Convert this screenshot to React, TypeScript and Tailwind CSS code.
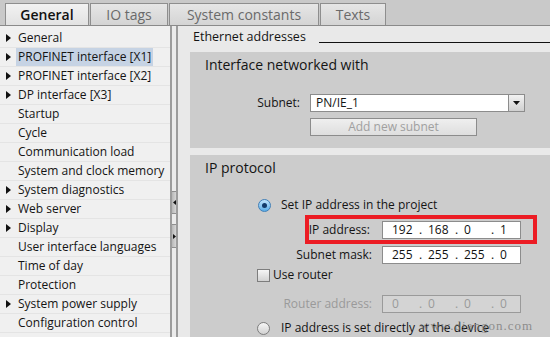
import React from "react";

const navItems: { label: string; arrow?: boolean; selected?: boolean }[] = [
  { label: "General", arrow: true },
  { label: "PROFINET interface [X1]", arrow: true, selected: true },
  { label: "PROFINET interface [X2]", arrow: true },
  { label: "DP interface [X3]", arrow: true },
  { label: "Startup" },
  { label: "Cycle" },
  { label: "Communication load" },
  { label: "System and clock memory" },
  { label: "System diagnostics", arrow: true },
  { label: "Web server", arrow: true },
  { label: "Display", arrow: true },
  { label: "User interface languages" },
  { label: "Time of day" },
  { label: "Protection" },
  { label: "System power supply", arrow: true },
  { label: "Configuration control" },
];

const tabs = [
  { label: "General", active: true, w: "w-[84px]" },
  { label: "IO tags", w: "w-[78px]" },
  { label: "System constants", w: "w-[150px]" },
  { label: "Texts", w: "w-[66px]" },
];

function Arrow() {
  return (
    <svg width="5" height="8" viewBox="0 0 5 8" className="shrink-0">
      <polygon points="0,0 5,4 0,8" fill="#111" />
    </svg>
  );
}

function IpBox({ parts, disabled }: { parts: string[]; disabled?: boolean }) {
  return (
    <div
      className={`flex h-[18px] w-[139px] items-center border pl-[9px] text-[12px] ${
        disabled
          ? "border-[#9a9a9a] bg-[#d4d4d4] text-[#9a9a9a]"
          : "border-[#8c8c8c] bg-white text-[#111]"
      }`}
    >
      {parts.map((p, i) => (
        <div key={i} className="flex w-[36px] shrink-0">
          <span className="w-[27px]">{p}</span>
          {i < 3 && <span>.</span>}
        </div>
      ))}
    </div>
  );
}

function Radio({ checked }: { checked?: boolean }) {
  return checked ? (
    <div className="flex h-[13px] w-[13px] items-center justify-center rounded-full border border-[#3f7fb8] bg-gradient-to-b from-[#bfe3fb] to-[#5aaee8]">
      <div className="h-[5px] w-[5px] rounded-full bg-[#123a6a]" />
    </div>
  ) : (
    <div className="h-[13px] w-[13px] rounded-full border border-[#7d7d7d] bg-gradient-to-b from-[#f6f6f6] to-[#d2d2d2]" />
  );
}

export default function App() {
  return (
    <div
      className="relative flex h-[337px] w-[550px] flex-col overflow-hidden bg-[#e9e9e9] text-[#141414]"
      style={{ fontFamily: '"Open Sans", "Noto Sans", sans-serif' }}
    >
      {/* tabs */}
      <div className="flex h-[26px] shrink-0 items-end gap-[1px] border-b border-[#8a8a8a] bg-[#c9c9c9] pl-[5px]">
        {tabs.map((t) => (
          <div
            key={t.label}
            className={`flex h-[22px] items-center justify-center border border-b-0 border-[#8e8e8e] text-[14px] ${t.w} ${
              t.active
                ? "bg-gradient-to-b from-[#f2f2f2] to-[#e2e2e2] font-semibold text-[#111]"
                : "bg-gradient-to-b from-[#e6e6e6] to-[#d4d4d4] text-[#6a6a6a]"
            }`}
          >
            {t.label}
          </div>
        ))}
      </div>

      <div className="flex min-h-0 flex-1">
        {/* left navigation */}
        <div className="w-[170px] shrink-0 bg-[#f0f0f0] pt-[3px] text-[12px]">
          {navItems.map((n) => (
            <div
              key={n.label}
              className="flex h-[19px] items-center border-b border-[#e4e4e4] pl-[6px]"
            >
              <div className="w-[10px]">{n.arrow && <Arrow />}</div>
              <span
                className={`whitespace-nowrap px-[2px] leading-[18px] ${
                  n.selected ? "bg-[#c6d3e4]" : ""
                }`}
              >
                {n.label}
              </span>
            </div>
          ))}
        </div>

        {/* splitter */}
        <div className="flex w-[8px] shrink-0 flex-col border-l-2 border-r-2 border-[#9c9c9c] bg-[#ebebeb] pt-[140px]">
          <div className="mt-[25px] flex h-[23px] items-center justify-center border-y border-[#8f8f8f] bg-gradient-to-r from-[#b8b8b8] to-[#d6d6d6]">
            <svg width="3" height="5" viewBox="0 0 3 5">
              <polygon points="3,0 0,2.5 3,5" fill="#111" />
            </svg>
          </div>
          <div className="mt-[10px] flex h-[24px] items-center justify-center border-y border-[#8f8f8f] bg-gradient-to-r from-[#b8b8b8] to-[#d6d6d6]">
            <svg width="3" height="5" viewBox="0 0 3 5">
              <polygon points="0,0 3,2.5 0,5" fill="#111" />
            </svg>
          </div>
        </div>

        {/* right content */}
        <div className="min-w-0 flex-1 pl-[12px] pt-[2px] text-[12px]">
          <div className="flex h-[18px] items-center">
            <span className="pl-[3px] text-[12.5px]">Ethernet addresses</span>
            <div className="mb-[3px] ml-[13px] h-px flex-1 self-end bg-[#111]" />
          </div>

          {/* Interface networked with */}
          <div className="mt-[6px] bg-[#cccccc] pb-[12px] pt-[3px]">
            <div className="h-[20px] pl-[15px] text-[14px] font-medium leading-[20px]">
              Interface networked with
            </div>
            <div className="mt-[19px] flex items-center">
              <span className="w-[110px] text-right">Subnet:</span>
              <div className="ml-[10px] flex h-[18px] w-[215px] items-center border border-[#8c8c8c] bg-white">
                <span className="flex-1 pl-[5px]">PN/IE_1</span>
                <div className="flex h-full w-[16px] items-center justify-center border-l border-[#8c8c8c] bg-gradient-to-b from-[#f2f2f2] to-[#d0d0d0]">
                  <svg width="7" height="4" viewBox="0 0 7 4">
                    <polygon points="0,0 7,0 3.5,4" fill="#111" />
                  </svg>
                </div>
              </div>
            </div>
            <div className="ml-[120px] mt-[6px] flex h-[18px] w-[167px] items-center justify-center border border-[#8c8c8c] bg-gradient-to-b from-[#efefef] to-[#dedede] text-[#a0a0a0]">
              Add new subnet
            </div>
          </div>

          {/* IP protocol */}
          <div className="mt-[7px] h-[200px] bg-[#cccccc] pt-[3px]">
            <div className="h-[20px] pl-[15px] text-[14px] font-medium leading-[20px]">
              IP protocol
            </div>
            <div className="mt-[19px] flex h-[16px] items-center pl-[68px]">
              <Radio checked />
              <span className="ml-[10px]">Set IP address in the project</span>
            </div>
            <div className="relative mt-[8px] flex items-center">
              <span className="w-[180px] text-right">IP address:</span>
              <div className="ml-[12px]">
                <IpBox parts={["192", "168", "0", "1"]} />
              </div>
              <div className="absolute left-[115px] top-[-6px] h-[29px] w-[232px] border-4 border-[#ec1c24]" />
            </div>
            <div className="mt-[7px] flex items-center">
              <span className="w-[182px] text-right">Subnet mask:</span>
              <div className="ml-[10px]">
                <IpBox parts={["255", "255", "255", "0"]} />
              </div>
            </div>
            <div className="mt-[4px] flex h-[14px] items-center pl-[67px]">
              <div className="h-[13px] w-[13px] border border-[#7d7d7d] bg-gradient-to-b from-[#f6f6f6] to-[#d2d2d2]" />
              <span className="ml-[3px]">Use router</span>
            </div>
            <div className="mt-[13px] flex items-center">
              <span className="w-[182px] text-right text-[#9a9a9a]">Router address:</span>
              <div className="ml-[10px]">
                <IpBox parts={["0", "0", "0", "0"]} disabled />
              </div>
            </div>
            <div className="mt-[8px] flex h-[14px] items-center pl-[67px]">
              <Radio />
              <span className="ml-[11px]">IP address is set directly at the device</span>
            </div>
          </div>
        </div>
      </div>

      <div
        className="pointer-events-none absolute left-[420px] top-[316px] text-[13px] tracking-[1px] text-[#6e6e6e]/70"
        style={{ fontFamily: '"Liberation Serif", serif' }}
      >
        www.diangon.com
      </div>
    </div>
  );
}
